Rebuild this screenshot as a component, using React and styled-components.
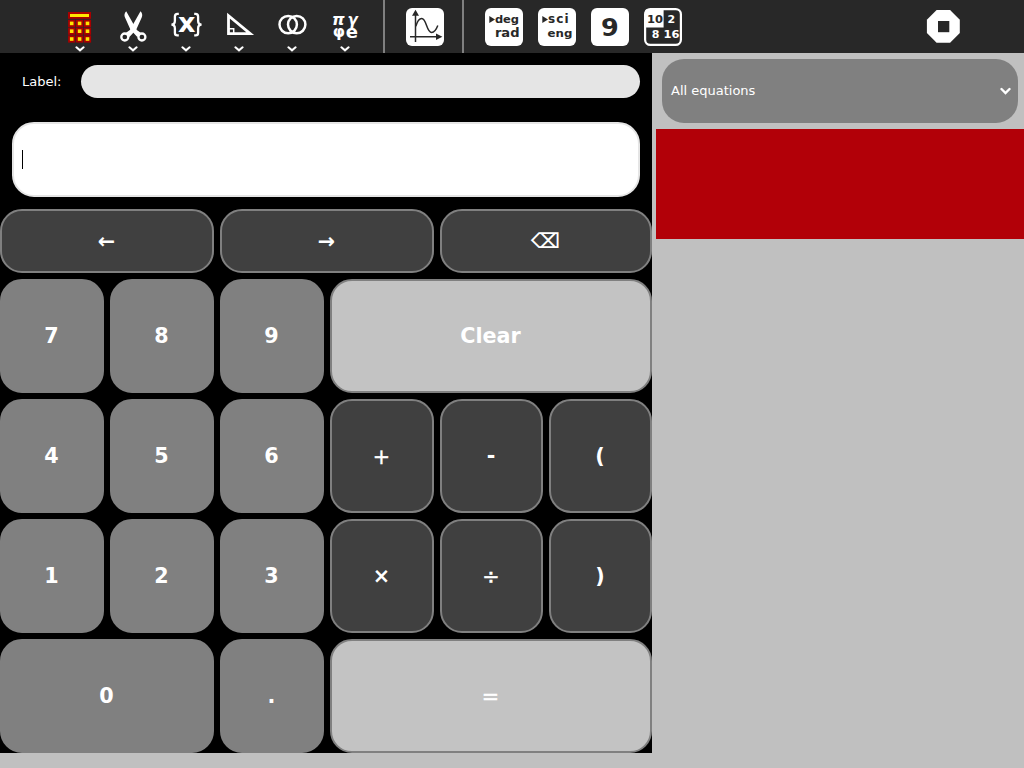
import React from "react";
import styled, { createGlobalStyle } from "styled-components";

const Global = createGlobalStyle`
  * { box-sizing: border-box; }
  body { margin: 0; overflow: hidden; background: #c0c0c0; font-family: "DejaVu Sans", sans-serif; }
  button { font-family: inherit; margin: 0; }
`;

const Page = styled.div`
  display: flex;
  flex-direction: column;
  width: 1024px;
  height: 768px;
  background: #c0c0c0;
`;

const Toolbar = styled.header`
  display: flex;
  height: 53px;
  flex: none;
  padding-left: 53px;
  background: #282828;
`;

const ToolButton = styled.button`
  width: 53px;
  height: 53px;
  padding: 0;
  border: 0;
  background: transparent;
  svg { display: block; }
`;

const StopButton = styled(ToolButton)`
  margin-left: auto;
  margin-right: 55px;
`;

const Separator = styled.div`
  width: 2px;
  height: 53px;
  background: #808080;
  margin: 0 ${(p) => p.$after}px 0 ${(p) => p.$before}px;
`;

const Main = styled.div`
  display: flex;
  flex: 1;
`;

const Calculator = styled.section`
  width: 652px;
  height: 700px;
  background: #000;
`;

const LabelRow = styled.div`
  display: flex;
  align-items: center;
  height: 45px;
  padding: 12px 12px 0 22px;
  color: #fff;
  font-size: 13px;
`;

const LabelText = styled.span`
  width: 59px;
`;

const LabelField = styled.div`
  flex: 1;
  height: 33px;
  border-radius: 17px;
  background: #e5e5e5;
`;

const Expression = styled.div`
  display: flex;
  align-items: center;
  height: 75px;
  margin: 24px 12px 12px;
  padding-left: 8px;
  border: 2px solid #e5e5e5;
  border-radius: 22px;
  background: #fff;
`;

const Caret = styled.div`
  width: 1px;
  height: 19px;
  background: #000;
`;

const Keypad = styled.div`
  display: grid;
  grid-template-columns: repeat(4, 104px) repeat(2, 103px);
  grid-template-rows: 64px repeat(4, 114px);
  gap: 6px;
`;

const keyFill = { digit: "#808080", operator: "#404040", wide: "#c3c3c3" };

const Key = styled.button`
  grid-column: span ${(p) => p.$span || 1};
  padding: ${(p) => (p.$thin ? "1px 1px 0 0" : "0 1px 1px 0")};
  border: 2px solid #808080;
  border-radius: 22px;
  background: ${(p) => keyFill[p.$kind]};
  color: #fff;
  font-size: 20.7px;
  font-weight: ${(p) => (p.$thin ? "normal" : "bold")};
  -webkit-text-stroke: ${(p) => (p.$thin ? "0.4px #fff" : "0")};
`;

const Sidebar = styled.aside`
  display: flex;
  flex-direction: column;
  flex: 1;
  padding: 6px 0 0 4px;
`;

const Filter = styled.div`
  display: flex;
  align-items: center;
  justify-content: space-between;
  height: 64px;
  margin: 0 6px;
  padding: 0 7px 1px 9px;
  border-radius: 22px;
  background: #808080;
  color: #fff;
  font-size: 13px;
  svg { display: block; }
`;

const Equation = styled.div`
  height: 110px;
  margin-top: 6px;
  background: #b20008;
`;

const Icon = ({ children, menu }) => (
  <svg width="53" height="53" viewBox="0 0 53 53" fill="none" fontFamily="DejaVu Sans, sans-serif" fontWeight="bold">
    {children}
    {menu && <path d="M23.4 47.3 27 50.3 30.6 47.3" stroke="#fff" strokeWidth="2.1" strokeLinecap="round" />}
  </svg>
);

const Tile = () => <rect x="8" y="8" width="38" height="38" rx="6" fill="#fff" />;

const dark = "#282828";

const CalcIcon = () => (
  <Icon menu>
    <rect x="15" y="12" width="23" height="6.8" fill="#a80000" />
    <rect x="17" y="14" width="19" height="3" fill="#ffe600" />
    {[23.4, 31.2, 39].map((y) =>
      [18.7, 26.6, 34.5].map((x) => (
        <g key={`${x}-${y}`}>
          <rect x={x - 3.6} y={y - 3.6} width="7.2" height="7.2" fill="#a80000" />
          <rect x={x - 1.8} y={y - 1.8} width="3.6" height="3.6" fill="#ffe600" />
        </g>
      ))
    )}
  </Icon>
);

const ScissorsIcon = () => (
  <Icon menu>
    <circle cx="18.8" cy="37" r="3.5" stroke="#fff" strokeWidth="2.3" />
    <circle cx="35.9" cy="37" r="3.5" stroke="#fff" strokeWidth="2.3" />
    <path d="M20.2 11.2C18.2 13.3 18.1 15.4 19 17.6L24.4 29.5 31.3 37 34.7 32.8 30.8 30Z" fill="#fff" />
    <path d="M34.5 11.2C36.5 13.3 36.6 15.4 35.7 17.6L30.3 29.5 23.4 37 20 32.8 23.9 30Z" fill="#fff" />
  </Icon>
);

const AlgebraIcon = () => (
  <Icon menu>
    <path d="M19.8 13.8H18.4Q15.9 13.8 15.9 16.5V20.8Q15.9 24.6 12.4 24.6 15.9 24.6 15.9 28.4V32.7Q15.9 35.4 18.4 35.4H19.8" stroke="#fff" strokeWidth="2.3" />
    <path d="M35.2 13.8H36.6Q39.1 13.8 39.1 16.5V20.8Q39.1 24.6 42.6 24.6 39.1 24.6 39.1 28.4V32.7Q39.1 35.4 36.6 35.4H35.2" stroke="#fff" strokeWidth="2.3" />
    <text x="18.9" y="32" fontSize="27" fill="#fff">x</text>
  </Icon>
);

const TrigIcon = () => (
  <Icon menu>
    <path d="M16.5 15.7V33.6H38.2Z" stroke="#fff" strokeWidth="2.8" />
    <path d="M17 28.7H21.7V33" stroke="#fff" strokeWidth="1.5" />
  </Icon>
);

const BooleanIcon = () => (
  <Icon menu>
    <circle cx="23.2" cy="24.6" r="8.7" stroke="#fff" strokeWidth="2.5" />
    <circle cx="31.7" cy="24.6" r="8.7" stroke="#fff" strokeWidth="2.5" />
  </Icon>
);

const ConstantsIcon = () => (
  <Icon menu>
    <g fill="#fff" fontSize="16">
      <text x="14" y="25" fontStyle="oblique">π</text>
      <text x="29.6" y="25" fontStyle="oblique" fontSize="15">γ</text>
      <text x="14.8" y="36.5" fontSize="15" textLength="12.2" lengthAdjust="spacingAndGlyphs">φ</text>
      <text x="27.7" y="37.5" fontSize="18">e</text>
    </g>
  </Icon>
);

const GraphIcon = () => (
  <Icon>
    <Tile />
    <path d="M17.5 42V14M12 36.7H39" stroke={dark} strokeWidth="1.5" />
    <path d="M17.5 9.7 21 15.8H14ZM44.4 36.7 38 40V33.4Z" fill={dark} />
    <path d="M17.8 26.2C19.5 20.5 21.5 18.4 23.8 18.4 28.5 18.4 28.5 32.4 33.6 32.4 36 32.4 38 30.3 39.8 25.5" stroke={dark} strokeWidth="1.5" />
  </Icon>
);

const AngleIcon = () => (
  <Icon>
    <Tile />
    <path d="M12.3 15.9V23L18 19.5Z" fill={dark} />
    <text x="17.9" y="22.8" fontSize="11" fill={dark} textLength="24.2" lengthAdjust="spacingAndGlyphs">deg</text>
    <text x="17.9" y="36.7" fontSize="12" fill={dark} textLength="24.6" lengthAdjust="spacingAndGlyphs">rad</text>
  </Icon>
);

const NotationIcon = () => (
  <Icon>
    <Tile />
    <path d="M12.3 15.9V23L18 19.5Z" fill={dark} />
    <text x="17.9" y="22.8" fontSize="12" fill={dark} letterSpacing="1.2">sci</text>
    <text x="17.6" y="36.7" fontSize="11" fill={dark} textLength="24.8" lengthAdjust="spacingAndGlyphs">eng</text>
  </Icon>
);

const DigitsIcon = () => (
  <Icon>
    <Tile />
    <text x="17.9" y="36" fontSize="25.5" fill={dark}>9</text>
  </Icon>
);

const BaseIcon = () => (
  <Icon>
    <rect x="9.1" y="9.1" width="35.8" height="35.8" rx="5.2" fill={dark} stroke="#fff" strokeWidth="2.2" />
    <path d="M9 27.5V12Q9 9 12 9H27.6V27.5Z" fill="#fff" />
    <g fontSize="11">
      <text x="10.9" y="23" fill={dark} textLength="16" lengthAdjust="spacingAndGlyphs">10</text>
      <text x="31.4" y="23" fill="#fff">2</text>
      <text x="15.8" y="38" fill="#fff">8</text>
      <text x="27.6" y="38" fill="#fff" textLength="16" lengthAdjust="spacingAndGlyphs">16</text>
    </g>
  </Icon>
);

const StopIcon = () => (
  <Icon>
    <path d="M20.6 10H34.1L43.8 19.7V33.1L34.1 42.8H20.6L10.9 33.1V19.7Z" fill="#fff" />
    <rect x="22" y="21" width="11.3" height="11.2" fill={dark} />
  </Icon>
);

const menus = [CalcIcon, ScissorsIcon, AlgebraIcon, TrigIcon, BooleanIcon, ConstantsIcon];
const formats = [AngleIcon, NotationIcon, DigitsIcon, BaseIcon];

const thinSymbols = ["+", "÷", "="];

const keys = [
  ["←", "operator", 2], ["→", "operator", 2], ["⌫", "operator", 2],
  ["7", "digit"], ["8", "digit"], ["9", "digit"], ["Clear", "wide", 3],
  ["4", "digit"], ["5", "digit"], ["6", "digit"], ["+", "operator"], ["-", "operator"], ["(", "operator"],
  ["1", "digit"], ["2", "digit"], ["3", "digit"], ["×", "operator"], ["÷", "operator"], [")", "operator"],
  ["0", "digit", 2], [".", "digit"], ["=", "wide", 3],
];

export default function App() {
  return (
    <Page>
      <Global />
      <Toolbar>
        {menus.map((Glyph, i) => <ToolButton key={i}><Glyph /></ToolButton>)}
        <Separator $before={12} $after={13} />
        <ToolButton><GraphIcon /></ToolButton>
        <Separator $before={11} $after={13} />
        {formats.map((Glyph, i) => <ToolButton key={i}><Glyph /></ToolButton>)}
        <StopButton><StopIcon /></StopButton>
      </Toolbar>
      <Main>
        <Calculator>
          <LabelRow>
            <LabelText>Label:</LabelText>
            <LabelField />
          </LabelRow>
          <Expression><Caret /></Expression>
          <Keypad>
            {keys.map(([text, kind, span]) => (
              <Key key={text} $kind={kind} $span={span} $thin={thinSymbols.includes(text)}>{text}</Key>
            ))}
          </Keypad>
        </Calculator>
        <Sidebar>
          <Filter>
            All equations
            <svg width="11" height="8" viewBox="0 0 11 8" fill="none">
              <path d="M1.5 2 5.5 6 9.5 2" stroke="#fff" strokeWidth="2.4" strokeLinecap="round" />
            </svg>
          </Filter>
          <Equation />
        </Sidebar>
      </Main>
    </Page>
  );
}
